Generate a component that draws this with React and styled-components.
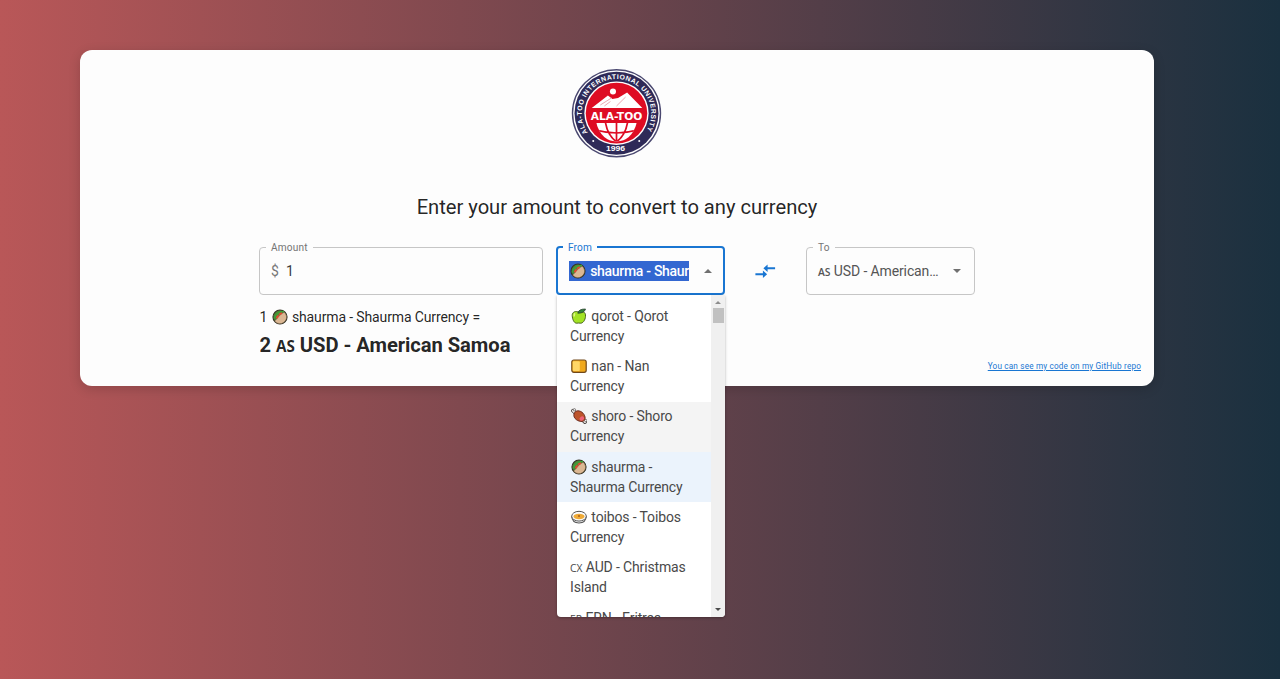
import React from 'react';
import styled, { createGlobalStyle, css } from 'styled-components';

const GlobalStyle = createGlobalStyle`
  *, *::before, *::after { box-sizing: border-box; }
  body {
    margin: 0;
    min-height: 679px;
    background: linear-gradient(to right, #b95758, #1a303f);
    font-family: Roboto, "Liberation Sans", sans-serif;
    color: rgba(0, 0, 0, 0.87);
    overflow: hidden;
  }
`;

const Page = styled.main`
  height: 679px;
  padding: 49.5px 126px 0 80px;
`;

const Card = styled.section`
  display: flex;
  flex-direction: column;
  align-items: center;
  height: 336.5px;
  padding: 19px 13px 0;
  border-radius: 12px;
  background: #fdfdfd;
  box-shadow: 0 3px 12px rgba(0, 0, 0, 0.16);
`;

const Logo = styled.svg`
  width: 91px;
  height: 90px;
  margin-right: 1px;
  flex: none;
`;

const Title = styled.h1`
  margin: 35px 0 0;
  font-size: 20.2px;
  line-height: 27px;
  font-weight: 400;
  letter-spacing: -0.03px;
  white-space: nowrap;
`;

const Form = styled.div`
  display: grid;
  grid-template-columns: 284px 169px 55px 169px;
  column-gap: 13px;
  width: 716px;
  margin-top: 21px;
`;

const Field = styled.fieldset`
  min-width: 0;
  height: 53px;
  margin: 0;
  padding: 0 ${(p) => (p.$focused ? '10px' : '11px')};
  border: ${(p) => (p.$focused ? '2px solid #1976d2' : '1px solid #c6c6c6')};
  border-radius: 4px;
`;

const Legend = styled.legend`
  display: block;
  height: 11px;
  margin-left: -5px;
  padding: 0 5px;
  font-size: 10.1px;
  line-height: 11px;
  letter-spacing: ${(p) => p.$spacing || '0.15px'};
  color: ${(p) => (p.$focused ? '#1976d2' : '#757575')};
`;

const FieldCell = styled.div`
  position: relative;
  height: 53px;
`;

const Value = styled.div`
  display: flex;
  align-items: center;
  height: 20px;
  margin-top: 8px;
  font-size: 14px;
  letter-spacing: -0.12px;
  white-space: nowrap;
  color: ${(p) => p.$color || '#3c3c3c'};
`;

const Prefix = styled.span`
  width: 15px;
  color: #777;
`;

const Selected = styled.span`
  width: 120px;
  height: 20px;
  line-height: 20px;
  margin-left: 1px;
  overflow: hidden;
  background: #3367d1;
  color: #fff;
  font-weight: 500;
  letter-spacing: -0.3px;
`;

const Clipped = styled.span`
  width: 122px;
`;

const Caret = styled.span`
  width: 0;
  height: 0;
  margin-left: auto;
  margin-right: ${(p) => (p.$up ? '1px' : '2px')};
  border: 4.5px solid transparent;
  ${(p) => (p.$up
    ? css`border-top-width: 0; border-bottom-color: #707070;`
    : css`border-bottom-width: 0; border-top-color: #707070;`)}
`;

const Swap = styled.div`
  display: flex;
  justify-content: center;
  padding-top: 18px;
`;

const Region = styled.span`
  font-family: "Open Sans", "Noto Sans", sans-serif;
  font-size: ${(p) => p.$size || '10.3px'};
  line-height: 1;
  font-weight: ${(p) => p.$weight || 'inherit'};
  letter-spacing: 0;
`;

const Glyph = styled.svg`
  width: 16px;
  height: 16px;
  margin-left: 1px;
  margin-right: 1px;
  vertical-align: -3px;
`;

const Menu = styled.div`
  position: absolute;
  top: 53px;
  left: 0.5px;
  z-index: 2;
  display: flex;
  width: 168.5px;
  height: 322px;
  overflow: hidden;
  border-radius: 0 0 4px 4px;
  background: #fff;
  box-shadow: 0 1px 3px rgba(0, 0, 0, 0.3);
`;

const Options = styled.ul`
  width: 154.5px;
  height: 100%;
  margin: 0;
  padding: 6.5px 0 0;
  overflow: hidden;
  list-style: none;
`;

const Option = styled.li`
  height: 50.35px;
  padding: 4.5px 13px 5px 13.5px;
  font-size: 14px;
  line-height: 20.15px;
  letter-spacing: -0.14px;
  color: #494949;
  background: ${(p) => ({ hover: '#f4f4f4', selected: '#ebf3fc' }[p.$state] || 'transparent')};
`;

const Scrollbar = styled.div`
  display: flex;
  flex-direction: column;
  align-items: center;
  justify-content: space-between;
  width: 14px;
  padding: 6px 0 6px;
  background: #f0f0f0;
`;

const Arrow = styled.span`
  width: 0;
  height: 0;
  border: 3.5px solid transparent;
  ${(p) => (p.$up
    ? css`border-top-width: 0; border-bottom-color: #8d8d8d;`
    : css`border-bottom-width: 0; border-top-color: #4c4c4c;`)}
`;

const Thumb = styled.span`
  width: 11px;
  height: 15px;
  margin: 4px 0 auto;
  background: #c1c1c1;
`;

const Result = styled.div`
  width: 716px;
  margin-top: 12px;
`;

const Source = styled.p`
  margin: 0;
  padding-left: 0.5px;
  font-size: 14px;
  line-height: 20px;
  letter-spacing: -0.13px;
`;

const Total = styled.p`
  margin: 5px 0 0;
  padding-left: 0.5px;
  font-size: 20.2px;
  line-height: 26px;
  font-weight: 700;
  letter-spacing: -0.06px;
`;

const RepoLink = styled.a`
  align-self: flex-end;
  margin-top: 3px;
  font-size: 8.2px;
  line-height: 10px;
  letter-spacing: 0.17px;
  color: #1976d2;
  text-decoration: underline;
`;

const Shaurma = () => (
  <Glyph viewBox="0 0 16 16">
    <circle cx="8" cy="8" r="7" fill="#4d8a32" stroke="#373126" strokeWidth="1.2" />
    <path d="M2 9.5C4 5 8 2 12 2.6" stroke="#3fa03c" strokeWidth="1.6" fill="none" />
    <path d="M2.6 12C5 10.5 7 5.5 12.2 3.3C16 6.5 15.3 12.5 9.6 14.5C6.5 15 4 14 2.6 12Z" fill="#dbb793" stroke="#65513d" strokeWidth=".5" />
    <path d="M4.6 9.2C6 6.5 7.5 5 10 4.2" stroke="#e34832" strokeWidth="1.9" strokeDasharray="3.4 .8" fill="none" />
  </Glyph>
);

const Apple = () => (
  <Glyph viewBox="0 0 16 16">
    <path d="M7.8 4.2C5 2.6 1 3.7 1.2 7.5C1.4 11.3 3 15 5.4 15.2C6.8 15 8.5 15 9.8 15.2C12.8 15 14.8 10.6 14.5 6.9C14.2 3.6 10.5 2.5 7.8 4.2Z" fill="#a2e324" stroke="#4b6425" />
    <path d="M4 5.3Q2.8 6.4 3.3 8.5" stroke="#def786" strokeWidth="1.6" fill="none" />
    <path d="M6.8 5.2Q7.5 1 14.5 1Q13.5 5.2 6.8 5.2Z" fill="#31833c" stroke="#263c28" strokeWidth=".8" />
  </Glyph>
);

const Bread = () => (
  <Glyph viewBox="0 0 16 16">
    <rect x=".8" y="2" width="14.4" height="12.3" rx="2" fill="#f0a91e" stroke="#70481b" strokeWidth="1.2" />
    <rect x="1.8" y="3.2" width="7" height="9.8" rx="1" fill="#ffd667" />
  </Glyph>
);

const Meat = () => (
  <Glyph viewBox="0 0 16 16">
    <path d="M2 2.7L14 14" stroke="#4a4442" strokeWidth="3.8" strokeLinecap="round" />
    <path d="M2 2.7L14 14" stroke="#eeeae6" strokeWidth="2.3" strokeLinecap="round" />
    <circle cx="3.4" cy="1.8" r="1.2" fill="#eee" stroke="#4a4442" strokeWidth=".6" />
    <circle cx="14.7" cy="12.5" r="1.2" fill="#eee" stroke="#4a4442" strokeWidth=".6" />
    <path d="M3 6C4.2 1.8 9 2 12 5.2C15 8.4 14.8 12.8 11.4 13.4C7.5 14 1.8 10.5 3 6Z" fill="#bd542b" stroke="#6b2c21" />
    <ellipse cx="10.8" cy="10.5" rx="2.4" ry="2" fill="#ef6177" transform="rotate(-38 10.8 10.5)" />
  </Glyph>
);

const Bowl = () => (
  <Glyph viewBox="0 0 16 16">
    <path d="M.7 7C1 12 4 14 8 14S15 12 15.3 7" fill="#fff" stroke="#555" strokeWidth="1.1" />
    <ellipse cx="8" cy="7.2" rx="7.3" ry="4.9" fill="#fafafa" stroke="#555" />
    <ellipse cx="8" cy="7.5" rx="5.5" ry="2.7" fill="#efaa36" />
    <circle cx="8" cy="7" r="1" fill="#a95b1c" />
  </Glyph>
);

const UniversityLogo = () => (
  <Logo viewBox="0 0 90 90" preserveAspectRatio="none" role="img" aria-label="Ala-Too International University">
    <defs>
      <clipPath id="globe"><path d="M25 54H65Q60 72 45 72.5Q30 72 25 54Z" /></clipPath>
      <path id="ring" d="M16.5 63.5A34.3 34.3 0 1 1 73.5 63.5" />
    </defs>
    <circle cx="45" cy="44.2" r="43.5" fill="#fff" stroke="#4a4870" strokeWidth="1.4" />
    <circle cx="45" cy="44.2" r="41.5" fill="#2e2a58" />
    <circle cx="45" cy="44.2" r="31.8" fill="#fff" />
    <circle cx="45" cy="44.2" r="30.4" fill="#de0c23" />
    <circle cx="41.5" cy="22.5" r="3" fill="#fff" />
    <path d="M20.5 39L36.5 26.5L41 30L46.5 29L55.5 23.5L70.5 39Z" fill="#fff" />
    <path d="M29 36L40 29M45 37L54 28M33 37L39 32.5" stroke="#e8a0a8" strokeWidth=".9" />
    <g clipPath="url(#globe)">
      <path d="M20 54H70V73H20Z" fill="#fff" />
      <path d="M45 53V73M34 53Q36 66 45 73M56 53Q54 66 45 73M24 61Q45 67 66 61" fill="none" stroke="#de0c23" strokeWidth="1.7" />
    </g>
    <text x="45" y="50.6" textAnchor="middle" textLength="51" lengthAdjust="spacingAndGlyphs" fontFamily="DejaVu Sans, sans-serif" fontSize="9.8" fontWeight="700" fill="#fff">ALA-TOO</text>
    <text fontFamily="Liberation Sans, sans-serif" fontSize="6.8" fontWeight="700" fill="#fff">
      <textPath href="#ring" textLength="145" lengthAdjust="spacing">ALA-TOO INTERNATIONAL UNIVERSITY</textPath>
    </text>
    <circle cx="22" cy="72" r="1" fill="#fff" />
    <circle cx="67.5" cy="72" r="1" fill="#fff" />
    <text x="44" y="82" textAnchor="middle" textLength="19" lengthAdjust="spacingAndGlyphs" fontFamily="Liberation Sans, sans-serif" fontSize="7.8" fontWeight="700" fill="#fff">1996</text>
  </Logo>
);

const options = [
  { icon: <Apple />, label: 'qorot - Qorot Currency' },
  { icon: <Bread />, label: 'nan - Nan Currency' },
  { icon: <Meat />, label: 'shoro - Shoro Currency', state: 'hover' },
  { icon: <Shaurma />, label: 'shaurma - Shaurma Currency', state: 'selected' },
  { icon: <Bowl />, label: 'toibos - Toibos Currency' },
  { icon: <Region>CX</Region>, label: 'AUD - Christmas Island' },
  { icon: <Region>ER</Region>, label: 'ERN - Eritrea' },
];

export default function App() {
  return (
    <>
      <GlobalStyle />
      <Page>
        <Card>
          <UniversityLogo />
          <Title>Enter your amount to convert to any currency</Title>
          <Form>
            <Field>
              <Legend $spacing="0.2px">Amount</Legend>
              <Value><Prefix>$</Prefix>1</Value>
            </Field>
            <FieldCell>
              <Field $focused>
                <Legend $focused>From</Legend>
                <Value>
                  <Selected><Shaurma /> shaurma - Shaurma Currency</Selected>
                  <Caret $up />
                </Value>
              </Field>
              <Menu>
                <Options>
                  {options.map((o) => (
                    <Option key={o.label} $state={o.state}>{o.icon} {o.label}</Option>
                  ))}
                </Options>
                <Scrollbar><Arrow $up /><Thumb /><Arrow /></Scrollbar>
              </Menu>
            </FieldCell>
            <Swap>
              <svg width="22.5" height="22.5" viewBox="0 0 24 24" fill="#1976d2">
                <path d="M9.5 14.2H1.5v2h8v3L14 15.2l-4.5-4zM14.5 12.8v-3h8v-2h-8v-3L10 8.8z" />
              </svg>
            </Swap>
            <Field>
              <Legend>To</Legend>
              <Value $color="#555"><Clipped><Region $weight="600">AS</Region> USD - American…</Clipped><Caret /></Value>
            </Field>
          </Form>
          <Result>
            <Source>1 <Shaurma /> shaurma - Shaurma Currency =</Source>
            <Total>2 <Region $size="15.2px">AS</Region> USD - American Samoa</Total>
          </Result>
          <RepoLink href="#">You can see my code on my GitHub repo</RepoLink>
        </Card>
      </Page>
    </>
  );
}
